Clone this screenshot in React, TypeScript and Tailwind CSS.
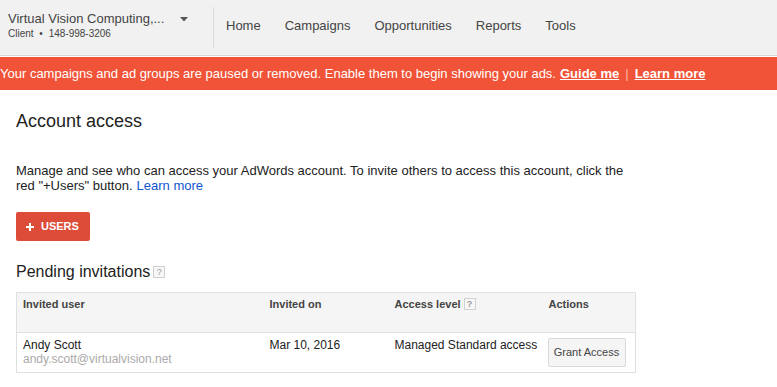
import React from "react";

const navItems = ["Home", "Campaigns", "Opportunities", "Reports", "Tools"];

const HelpBox = () => (
  <span className="inline-flex h-[12px] w-[12px] items-center justify-center border border-[#d0d0d0] bg-[#f7f7f7] text-[9px] leading-none text-[#999]">
    ?
  </span>
);

const App = () => {
  return (
    <div className="min-h-[387px] w-[777px] overflow-hidden bg-white font-['Liberation_Sans',Arial,sans-serif] text-[#222]">
      {/* top bar */}
      <div className="flex h-[56px] items-stretch border-b border-[#d6d6d6] bg-[#f1f1f1]">
        <div className="flex w-[213px] items-start pl-2 pt-[11px]">
          <div className="flex flex-col">
            <span className="text-[13px] leading-[16px] text-[#444]">Virtual Vision Computing,...</span>
            <span className="mt-[1px] text-[10px] leading-[12px] text-[#444]">
              Client <span className="mx-[3px]">•</span> 148-998-3206
            </span>
          </div>
          <svg width="8" height="5" viewBox="0 0 8 5" className="ml-[16px] mt-[6px]">
            <path d="M0 0 L8 0 L4 4.5 Z" fill="#555" />
          </svg>
        </div>
        <div className="my-[7px] w-px bg-[#dcdcdc]" />
        <nav className="ml-[12px] flex items-center gap-[24px] pb-[3px] text-[13px] text-[#444]">
          {navItems.map((n) => (
            <span key={n}>{n}</span>
          ))}
        </nav>
      </div>

      {/* warning banner */}
      <div className="mt-px flex h-[33px] items-center whitespace-nowrap bg-[#f05337] pl-0 text-[13px] text-white">
        <span>Your campaigns and ad groups are paused or removed. Enable them to begin showing your ads.</span>
        <span className="ml-[4px] font-bold underline">Guide me</span>
        <span className="mx-[6px] text-[#f8b7a8]">|</span>
        <span className="font-bold underline">Learn more</span>
      </div>

      <main className="px-4">
        <h1 className="mt-[20px] text-[18px] leading-[22px] text-[#222]">Account access</h1>

        <div className="mt-[31px] text-[13px] leading-[15px] text-[#222]">
          <p>Manage and see who can access your AdWords account. To invite others to access this account, click the</p>
          <p className="flex gap-[4px]">
            <span>red "+Users" button.</span>
            <span className="text-[#1155cc]">Learn more</span>
          </p>
        </div>

        <button className="mt-[19px] flex h-[29px] w-[74px] items-center gap-[7px] rounded-[2px] bg-[#dd4b39] pl-[10px] text-[11px] font-bold text-white">
          <svg width="8" height="8" viewBox="0 0 8 8">
            <path d="M3 0h2v3h3v2H5v3H3V5H0V3h3z" fill="#fff" />
          </svg>
          USERS
        </button>

        <div className="mt-[21px] flex items-center gap-[3px]">
          <h2 className="text-[16px] leading-[20px] text-[#222]">Pending invitations</h2>
          <HelpBox />
        </div>

        <table className="mt-[10px] w-[620px] table-fixed border-collapse border border-[#e0e0e0] text-left">
          <thead>
            <tr className="h-[40px] border-b border-[#e0e0e0] bg-[#f5f5f5] align-top text-[11px] font-bold text-[#444]">
              <th className="w-[247px] px-[6px] pt-[3px]">Invited user</th>
              <th className="w-[125px] px-[6px] pt-[3px]">Invited on</th>
              <th className="w-[154px] px-[6px] pt-[3px]">
                <span className="inline-flex items-center gap-[3px]">
                  Access level <HelpBox />
                </span>
              </th>
              <th className="px-[6px] pt-[3px]">Actions</th>
            </tr>
          </thead>
          <tbody>
            <tr className="h-[40px] align-top text-[12px] text-[#222]">
              <td className="px-[6px] pt-[5px] leading-[14px]">
                <div>Andy Scott</div>
                <div className="text-[#aaa]">andy.scott@virtualvision.net</div>
              </td>
              <td className="px-[6px] pt-[5px] leading-[14px]">Mar 10, 2016</td>
              <td className="whitespace-nowrap px-[6px] pt-[5px] leading-[14px]">Managed Standard access</td>
              <td className="px-[5px] pt-[5px]">
                <button className="h-[29px] w-[78px] rounded-[2px] border border-[#d9d9d9] bg-[#f5f5f5] text-[11px] text-[#444]">
                  Grant Access
                </button>
              </td>
            </tr>
          </tbody>
        </table>
      </main>
    </div>
  );
};

export default App;
